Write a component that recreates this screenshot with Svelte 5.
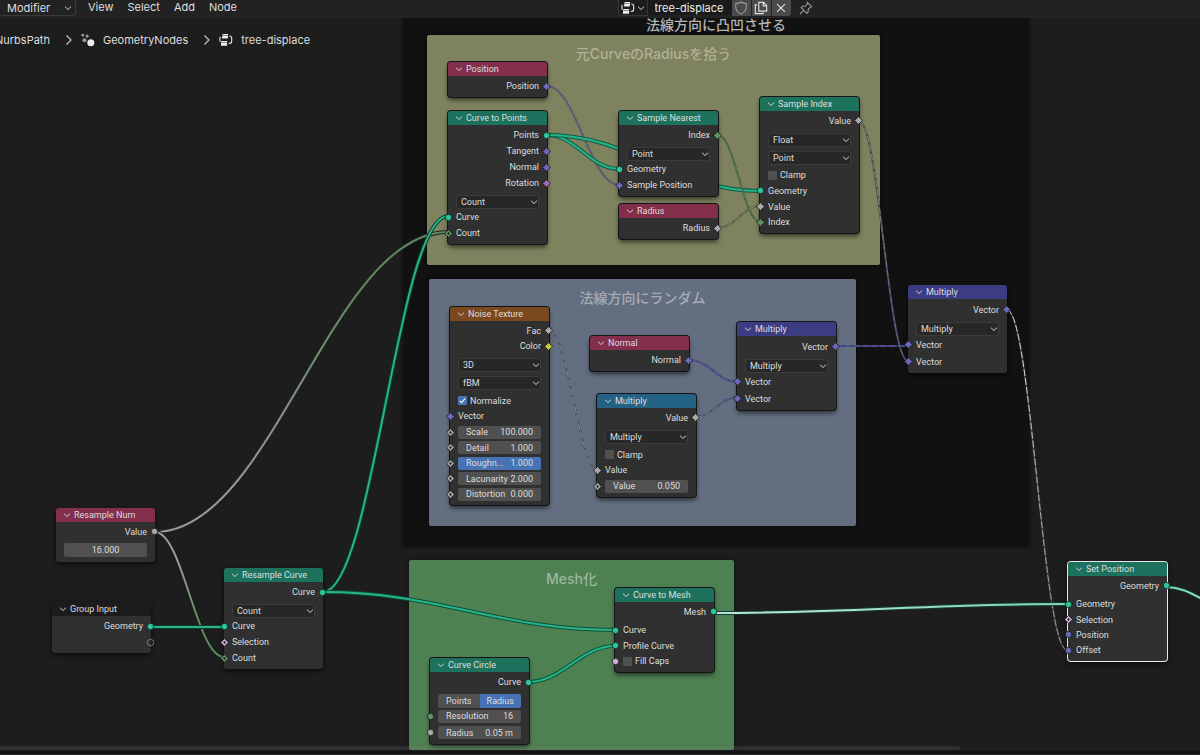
<script lang="ts">
  type Socket = "geo" | "vec" | "float" | "int" | "bool" | "rot" | "color" | "empty";
  type Shape = "circle" | "diamond" | "hollow";
  type Row = {
    kind: "out" | "in" | "select" | "check" | "field" | "value" | "tabs";
    label: string;
    socket?: Socket;
    shape?: Shape;
    value?: string;
    on?: boolean;
  };
  type Node = {
    id: string;
    title: string;
    tone: string;
    x: number;
    y: number;
    h: number;
    state?: "framed" | "selected";
    rows: Row[];
  };

  const out = (label: string, socket: Socket, shape: Shape = "circle"): Row => ({ kind: "out", label, socket, shape });
  const inp = (label: string, socket: Socket, shape: Shape = "circle"): Row => ({ kind: "in", label, socket, shape });
  const select = (label: string): Row => ({ kind: "select", label });
  const check = (label: string, on = false, socket?: Socket): Row => ({ kind: "check", label, on, socket, shape: "circle" });
  const field = (label: string, value: string, socket: Socket = "float", shape: Shape = "hollow", on = false): Row => ({
    kind: "field", label, value, socket, shape, on,
  });

  // canvas coordinates, top left corner of each node
  const nodes: Node[] = [
    { id: "position", title: "Position", tone: "input", x: 448, y: 62, h: 35, state: "framed",
      rows: [out("Position", "vec", "diamond")] },
    { id: "points", title: "Curve to Points", tone: "geometry", x: 448, y: 111, h: 133, state: "framed",
      rows: [
        out("Points", "geo"), out("Tangent", "vec", "diamond"), out("Normal", "vec", "diamond"),
        out("Rotation", "rot", "diamond"), select("Count"), inp("Curve", "geo"), inp("Count", "int", "hollow"),
      ] },
    { id: "nearest", title: "Sample Nearest", tone: "geometry", x: 619, y: 111, h: 85, state: "framed",
      rows: [out("Index", "int", "diamond"), select("Point"), inp("Geometry", "geo"), inp("Sample Position", "vec", "diamond")] },
    { id: "radius", title: "Radius", tone: "input", x: 619, y: 204, h: 35, state: "framed",
      rows: [out("Radius", "float", "diamond")] },
    { id: "index", title: "Sample Index", tone: "geometry", x: 760, y: 97, h: 136, state: "framed",
      rows: [
        out("Value", "float", "diamond"), select("Float"), select("Point"), check("Clamp"),
        inp("Geometry", "geo"), inp("Value", "float", "diamond"), inp("Index", "int", "diamond"),
      ] },
    { id: "noise", title: "Noise Texture", tone: "texture", x: 450, y: 307, h: 198, state: "framed",
      rows: [
        out("Fac", "float", "diamond"), out("Color", "color", "diamond"), select("3D"), select("fBM"),
        check("Normalize", true), inp("Vector", "vec", "diamond"), field("Scale", "100.000"), field("Detail", "1.000"),
        field("Roughn...", "1.000", "float", "hollow", true), field("Lacunarity", "2.000"), field("Distortion", "0.000"),
      ] },
    { id: "normal", title: "Normal", tone: "input", x: 590, y: 336, h: 35, state: "framed",
      rows: [out("Normal", "vec", "diamond")] },
    { id: "math", title: "Multiply", tone: "converter", x: 597, y: 394, h: 103, state: "framed",
      rows: [
        out("Value", "float", "diamond"), select("Multiply"), check("Clamp"),
        inp("Value", "float", "diamond"), field("Value", "0.050"),
      ] },
    { id: "vecmath", title: "Multiply", tone: "vector", x: 737, y: 322, h: 88, state: "framed",
      rows: [out("Vector", "vec", "diamond"), select("Multiply"), inp("Vector", "vec", "diamond"), inp("Vector", "vec", "diamond")] },
    { id: "scale", title: "Multiply", tone: "vector", x: 908, y: 285, h: 88,
      rows: [out("Vector", "vec", "diamond"), select("Multiply"), inp("Vector", "vec", "diamond"), inp("Vector", "vec", "diamond")] },
    { id: "num", title: "Resample Num", tone: "input", x: 56, y: 508, h: 54,
      rows: [out("Value", "float"), { kind: "value", label: "Value", value: "16.000" }] },
    { id: "group", title: "Group Input", tone: "group", x: 52, y: 602, h: 51,
      rows: [out("Geometry", "geo"), out("", "empty")] },
    { id: "resample", title: "Resample Curve", tone: "geometry", x: 224, y: 568, h: 101,
      rows: [out("Curve", "geo"), select("Count"), inp("Curve", "geo"), inp("Selection", "bool", "hollow"), inp("Count", "int", "hollow")] },
    { id: "circle", title: "Curve Circle", tone: "geometry", x: 430, y: 658, h: 86, state: "framed",
      rows: [
        out("Curve", "geo"), { kind: "tabs", label: "Mode" },
        field("Resolution", "16", "int", "circle"), field("Radius", "0.05 m", "float", "circle"),
      ] },
    { id: "mesh", title: "Curve to Mesh", tone: "geometry", x: 615, y: 588, h: 84, state: "framed",
      rows: [out("Mesh", "geo"), inp("Curve", "geo"), inp("Profile Curve", "geo"), check("Fill Caps", false, "bool")] },
    { id: "setpos", title: "Set Position", tone: "geometry", x: 1068, y: 562, h: 99, state: "selected",
      rows: [
        out("Geometry", "geo"), inp("Geometry", "geo"), inp("Selection", "bool", "hollow"),
        inp("Position", "vec"), inp("Offset", "vec"),
      ] },
  ];

  const frames = [
    { name: "outer", title: "法線方向に凸凹させる", x: 403, y: 15, w: 626, h: 532 },
    { name: "olive", title: "元CurveのRadiusを拾う", x: 427, y: 35, w: 453, h: 230 },
    { name: "blue", title: "法線方向にランダム", x: 429, y: 279, w: 427, h: 247 },
    { name: "green", title: "Mesh化", x: 409, y: 560, w: 325, h: 190 },
  ];

  const GEO = "#27b489";
  const VEC = "#5f5fa6";
  const FLOAT = "#9a9a9a";
  const INT = "#5a8a5c";

  // from, to, colours at both ends; field links are thin and dashed
  const links = [
    { p: [547, 86, 619, 185], c: ["#62617a", "#62617a"], field: true, rim: "#5a5968" },
    { p: [547, 135, 619, 169], c: [GEO, GEO], field: false, rim: "#0d5c46" },
    { p: [547, 135, 760, 191], c: [GEO, GEO], field: false, rim: "#0d5c46" },
    { p: [718, 135, 760, 222], c: ["#557a54", "#557a54"], field: true, rim: "#43603f" },
    { p: [718, 228, 760, 206], c: ["#86886f", "#86886f"], field: true, rim: "#55573f" },
    { p: [859, 121, 908, 361], c: ["#85876f", VEC], field: true, rim: "#44434c" },
    { p: [549, 331, 598, 470], c: ["#868c94", "#868c94"], field: true, rim: "#4a5058" },
    { p: [690, 360, 737, 382], c: [VEC, VEC], field: true, rim: "#3d4078" },
    { p: [696, 417, 737, 397], c: ["#868c94", VEC], field: true, rim: "#464a60" },
    { p: [835, 346, 908, 346], c: [VEC, VEC], field: true, rim: "#3a3a6a" },
    { p: [1007, 310, 1067, 650], c: ["#d0d0d0", "#9a9aae"], field: true, rim: "#3a3a3a" },
    { p: [155, 532, 448, 232], c: [FLOAT, INT], field: false, rim: "#222" },
    { p: [155, 532, 224, 657], c: [FLOAT, INT], field: false, rim: "#1a1a1a" },
    { p: [151, 627, 224, 627], c: [GEO, GEO], field: false, rim: "#0f3a2e" },
    { p: [323, 592, 448, 216], c: [GEO, GEO], field: false, rim: "#0b3b2d" },
    { p: [323, 592, 615, 630], c: [GEO, GEO], field: false, rim: "#0b4f3a" },
    { p: [528, 682, 615, 646], c: [GEO, GEO], field: false, rim: "#0b5a42" },
    { p: [713, 613, 1067, 604], c: ["#b6e6d8", "#86d8bd"], field: false, rim: "#16382e" },
    { p: [1166, 587, 1236, 610], c: ["#86d8bd", "#b6e6d8"], field: false, rim: "#16382e" },
  ];

  function curve([x1, y1, x2, y2]: number[]) {
    const reach = (x2 - x1) * 0.4;
    return `M${x1} ${y1}C${x1 + reach} ${y1} ${x2 - reach} ${y2} ${x2} ${y2}`;
  }

  const menus = ["View", "Select", "Add", "Node"];
  let mode = $state("Radius");
</script>

{#snippet chevron()}
  <svg class="chev" viewBox="0 0 8 8" aria-hidden="true"><path d="M1 2.7 4 5.5 7 2.7" /></svg>
{/snippet}

{#snippet treeIcon()}
  <svg class="ico" viewBox="0 0 16 16" aria-hidden="true">
    <path class="fill" d="M4.2 1h6.3l-.4 5.4H3.4zM2.6 9h6.8l-.2 5.7H2.2z" />
    <path class="dark" d="M3.8 2.8h6.4M2.8 10.8h6.4" />
    <path class="line" d="M11.8 3.4q2.7 0 2.7 2.6v3.3q0 2.7-3.3 2.7M1.6 4.4Q.4 7 1.5 10" />
  </svg>
{/snippet}

{#snippet dot(socket: Socket, shape: Shape)}
  <svg class="socket {socket}" viewBox="0 0 9 9" aria-hidden="true">
    {#if socket === "empty"}
      <circle cx="4.5" cy="4.5" r="3.2" />
    {:else if shape === "circle"}
      <circle cx="4.5" cy="4.5" r="3.2" />
    {:else}
      <path d="M4.5.6 8.4 4.5 4.5 8.4.6 4.5z" />
      {#if shape === "hollow"}<path class="hole" d="M4.5 3.1 5.9 4.5 4.5 5.9 3.1 4.5z" />{/if}
    {/if}
  </svg>
{/snippet}

<div class="editor">
  <main class="canvas">
    {#each frames as f (f.name)}
      <section class="frame {f.name}" style="left:{f.x}px;top:{f.y}px;width:{f.w}px;height:{f.h}px">
        <h2>{f.title}</h2>
      </section>
    {/each}

    <svg class="links" aria-hidden="true">
      <defs>
        {#each links as l, i}
          <linearGradient id="l{i}" gradientUnits="userSpaceOnUse" x1={l.p[0]} y1={l.p[1]} x2={l.p[2]} y2={l.p[3]}>
            <stop offset="0.2" stop-color={l.c[0]} />
            <stop offset="0.8" stop-color={l.c[1]} />
          </linearGradient>
        {/each}
      </defs>
      {#each links as l, i}
        <path class:thin={l.field} class="rim" d={curve(l.p)} stroke={l.rim} />
        <path class:dash={l.field} class="core" d={curve(l.p)} stroke={l.p[1] === l.p[3] ? l.c[0] : `url(#l${i})`} />
      {/each}
    </svg>

    {#each nodes as n (n.id)}
      <article class="node {n.state ?? ''}" style="left:{n.x}px;top:{n.y}px;height:{n.h}px">
        <header class={n.tone}>{@render chevron()}<span>{n.title}</span></header>
        <div class="body">
          {#each n.rows as r, i}
            <div class="row {r.kind}">
              {#if r.socket}{@render dot(r.socket, r.shape ?? "circle")}{/if}
              {#if r.kind === "select"}
                <select aria-label="{n.title} option {i}"><option>{r.label}</option></select>
                {@render chevron()}
              {:else if r.kind === "check"}
                <label><input type="checkbox" checked={r.on} /><span>{r.label}</span></label>
              {:else if r.kind === "field"}
                <label class:on={r.on}><span>{r.label}</span><input type="text" value={r.value} /></label>
              {:else if r.kind === "value"}
                <input type="text" aria-label={r.label} value={r.value} />
              {:else if r.kind === "tabs"}
                {#each ["Points", "Radius"] as m}
                  <button type="button" class:on={mode === m} onclick={() => (mode = m)}>{m}</button>
                {/each}
              {:else}
                <span>{r.label}</span>
              {/if}
            </div>
          {/each}
        </div>
      </article>
    {/each}
  </main>

  <div class="bar">
    <div class="menu">
      <div class="type">
        <select aria-label="Node tree type"><option>Modifier</option></select>
        {@render chevron()}
      </div>
      {#each menus as m}
        <button type="button">{m}</button>
      {/each}
    </div>
    <div class="tree">
      <button type="button" class="browse" aria-label="Browse node tree">{@render treeIcon()}{@render chevron()}</button>
      <input type="text" aria-label="Node tree name" value="tree-displace" />
      <button type="button" class="tool" aria-label="Fake user">
        <svg class="ico" viewBox="0 0 16 16"><path class="dim" d="M8 1.2Q5.5 3 2 3v4.5Q2.4 12.2 8 15q5.6-2.8 6-7.5V3Q10.5 3 8 1.2z" /></svg>
      </button>
      <button type="button" class="tool" aria-label="New node tree">
        <svg class="ico" viewBox="0 0 16 16"><path class="line" d="M5.5 1.5H11L14.500 5v6.500h-9zM10.500 1.500v4h4M3.500 4.500h-2v10h9V13" /></svg>
      </button>
      <button type="button" class="tool last" aria-label="Unlink node tree">
        <svg class="ico" viewBox="0 0 16 16"><path class="line" d="M3.5 3.5l9 9M12.5 3.5l-9 9" /></svg>
      </button>
      <button type="button" class="pin" aria-label="Pin">
        <svg class="ico" viewBox="0 0 16 16"><path class="dim" d="M9.5 1.5l5 5-1.5.5-2.5 2.5v3L9 14 2.5 7.5 4 6h3l2.500-2.500zM5.500 10.500 1 15" /></svg>
      </button>
    </div>
    <div class="rest"></div>
  </div>

  <nav class="path" aria-label="Context">
    <a href="#curve">NurbsPath</a>
    <svg class="sep" viewBox="0 0 8 12" aria-hidden="true"><path d="M1.5 1.5 6 6l-4.5 4.5" /></svg>
    <a href="#modifier">
      <svg class="ico" viewBox="0 0 16 16" aria-hidden="true">
        <circle class="fill" cx="11.2" cy="11" r="4" />
        <circle class="soft" cx="4" cy="8.4" r="2.3" />
        <circle class="soft" cx="2" cy="2.5" r="1.6" />
        <circle class="soft" cx="7" cy="3.5" r="1.8" />
      </svg>
      <span>GeometryNodes</span>
    </a>
    <svg class="sep" viewBox="0 0 8 12" aria-hidden="true"><path d="M1.5 1.5 6 6l-4.5 4.5" /></svg>
    <a href="#tree">{@render treeIcon()}<span>tree-displace</span></a>
  </nav>

  <div class="scroll"></div>
  <div class="edge"></div>
</div>

<style>
  :global(body) {
    margin: 0;
    background: #1d1d1d;
  }
  .editor {
    position: relative;
    display: flex;
    flex-direction: column;
    height: 100vh;
    overflow: hidden;
    background: #1d1d1d;
    color: #dedede;
    font-family: Inter, "Noto Sans CJK JP", sans-serif;
    font-size: 11px;
  }
  button,
  input,
  select {
    margin: 0;
    padding: 0;
    border: 0;
    border-radius: 0;
    outline: none;
    background: none;
    color: inherit;
    font: inherit;
    appearance: none;
  }
  a {
    color: inherit;
    text-decoration: none;
  }
  svg {
    flex: none;
    fill: none;
  }
  .chev {
    width: 8px;
    height: 8px;
    stroke: #d0d0d0;
    pointer-events: none;
  }
  .ico {
    width: 14px;
    height: 14px;
  }
  .line {
    stroke: #e0e0e0;
    stroke-width: 1.3;
  }
  .dim {
    stroke: #a0a0a0;
    stroke-width: 1.2;
  }
  .dark {
    stroke: #777;
    stroke-width: 1;
  }
  .fill {
    fill: #ececec;
  }
  .soft {
    fill: #9a9a9a;
  }

  /* header */
  .bar {
    position: relative;
    display: flex;
    justify-content: space-between;
    height: 18px;
    background: #222;
  }
  .menu {
    display: flex;
    gap: 14px;
    align-items: flex-start;
  }
  .menu button {
    height: 15px;
    line-height: 15px;
  }
  .type {
    display: flex;
    align-items: center;
    width: 76px;
    height: 16px;
    margin-right: -2px;
    box-sizing: border-box;
    padding-right: 3px;
    border: 1px solid #3a3a3a;
    border-width: 0 1px 1px 0;
    border-radius: 0 0 3px 3px;
  }
  .type select {
    flex: 1;
    min-width: 0;
    padding-left: 7px;
  }
  .tree {
    display: flex;
    height: 16px;
  }
  .tree button {
    display: flex;
    align-items: center;
    justify-content: center;
  }
  .tree .browse {
    width: 30px;
    gap: 2px;
    background: #1d1d1d;
    border: 1px solid #363636;
    border-top: 0;
    border-radius: 0 0 0 3px;
    box-sizing: border-box;
  }
  .tree input {
    width: 84px;
    height: 15px;
    padding-left: 7px;
    box-sizing: border-box;
    background: #1a1a1a;
    color: #eee;
  }
  .tree .tool {
    width: 19px;
    background: #4a4a4a;
    margin-right: 1px;
  }
  .tree .tool.last {
    border-radius: 0 0 3px 0;
  }
  .tree .pin {
    width: 28px;
  }

  .path {
    position: relative;
    display: flex;
    align-items: center;
    gap: 15px;
    height: 44px;
    margin-left: -5px;
  }
  .path a {
    display: flex;
    align-items: center;
    gap: 8px;
  }
  .sep {
    width: 8px;
    height: 12px;
    stroke: #bbb;
    stroke-width: 1.3;
    margin-right: -7px;
  }

  /* canvas */
  .canvas {
    position: absolute;
    inset: 0 0 5px;
    overflow: hidden;
    font-family: Roboto, "Noto Sans CJK JP", sans-serif;
    font-size: 9px;
  }
  .frame {
    position: absolute;
    border-radius: 2px;
    box-shadow: 0 0 4px #0008;
  }
  .frame h2 {
    margin: 0;
    padding-top: 9px;
    font-family: Inter, "Noto Sans CJK JP", sans-serif;
    font-size: 14px;
    line-height: 20px;
    font-weight: 500;
    text-align: center;
    color: #b0b196;
  }
  .outer {
    background: #111;
  }
  .frame.outer h2 {
    padding-top: 0;
    color: #b4b4b4;
  }
  .olive {
    background: #7f825f;
  }
  .blue {
    background: #636f81;
  }
  .blue h2 {
    color: #a5abb5;
  }
  .green {
    background: #4e8152;
  }
  .green h2 {
    color: #98b89a;
  }
  .links {
    position: absolute;
    inset: 0;
    width: 100%;
    height: 100%;
  }
  .rim {
    stroke-width: 4;
  }
  .rim.thin {
    stroke-width: 2;
  }
  .core {
    stroke-width: 2;
  }
  .core.dash {
    stroke-width: 1;
    stroke-dasharray: 7 2;
  }

  .node {
    position: absolute;
    display: flex;
    flex-direction: column;
    width: 99px;
    border-radius: 3px;
    background: #303030;
    box-shadow: 0 2px 5px #000a;
  }
  .framed {
    box-shadow: 0 0 0 1px #151515, 0 3px 5px #0009;
  }
  .selected {
    box-shadow: 0 0 0 1px #e8e8e8, 0 3px 6px #000a;
  }
  .node header {
    display: flex;
    align-items: center;
    gap: 3px;
    height: 14px;
    padding-left: 7px;
    border-radius: 3px 3px 0 0;
    white-space: nowrap;
  }
  .input {
    background: #832f4b;
  }
  .geometry {
    background: #1d725d;
  }
  .texture {
    background: #7a481f;
  }
  .converter {
    background: #246283;
  }
  .vector {
    background: #3c3c83;
  }
  .group {
    background: #1c1c1c;
  }
  .body {
    flex: 1;
    display: flex;
    flex-direction: column;
    padding: 2px 0 3px;
  }
  .row {
    position: relative;
    flex: 1 1 15px;
    display: flex;
    align-items: center;
    padding: 0 8px;
    white-space: nowrap;
  }
  .out {
    justify-content: flex-end;
  }
  .out + .in {
    margin-top: 3px;
  }
  .select,
  .tabs,
  .value {
    flex: none;
    height: 14px;
    margin-top: 4px;
  }
  .select select {
    flex: 1;
    min-width: 0;
    height: 14px;
    padding-left: 4px;
    box-sizing: border-box;
    border: 1px solid #3b3b3b;
    border-radius: 2px;
    background: #272727;
  }
  .select .chev {
    position: absolute;
    right: 9px;
  }
  .select + .check {
    margin-top: 3px;
  }
  .value {
    margin-bottom: 2px;
  }
  .check label {
    display: flex;
    align-items: center;
    gap: 3px;
  }
  .check input {
    width: 9px;
    height: 9px;
    border-radius: 1px;
    background: #505050;
  }
  .check input:checked {
    display: grid;
    place-items: center;
    background: #4772b3;
  }
  .check input:checked::after {
    content: "";
    width: 2px;
    height: 5px;
    margin-bottom: 2px;
    border: solid #fff;
    border-width: 0 1px 1px 0;
    transform: rotate(40deg);
  }
  .field label {
    flex: 1;
    display: flex;
    align-items: center;
    height: 13px;
    padding: 0 8px;
    border-radius: 2px;
    background: #505050;
  }
  .field label.on {
    background: #4772b3;
  }
  .field label span {
    flex: 1;
    width: 0;
  }
  .field input {
    width: 34px;
    text-align: right;
  }
  .value input {
    flex: 1;
    min-width: 0;
    height: 14px;
    border-radius: 2px;
    background: #505050;
    text-align: center;
  }
  .tabs button {
    flex: 1;
    height: 14px;
    background: #505050;
    border-radius: 2px 0 0 2px;
  }
  .tabs button + button {
    border-radius: 0 2px 2px 0;
  }
  .tabs button.on {
    background: #4772b3;
  }

  .socket {
    position: absolute;
    left: -4px;
    width: 9px;
    height: 9px;
    fill: currentColor;
    stroke: #17171b;
    stroke-width: 0.8;
  }
  .out .socket {
    left: auto;
    right: -4px;
  }
  .hole {
    fill: #222;
    stroke: none;
  }
  .geo {
    color: #2cc79b;
  }
  .vec {
    color: #6a69b9;
  }
  .float {
    color: #a8a8a8;
  }
  .int {
    color: #5f9463;
  }
  .bool {
    color: #d0afd9;
  }
  .rot {
    color: #a267b8;
  }
  .color {
    color: #c9c936;
  }
  .empty {
    fill: none;
    stroke: #8a8a8a;
  }

  .scroll {
    position: absolute;
    left: 0;
    right: 20%;
    bottom: 5px;
    height: 4px;
    border-radius: 0 2px 2px 0;
    background: #80808030;
  }
  .edge {
    height: 3px;
    margin-top: auto;
    background: #131313;
    border-bottom: 1px solid #2c2c2c;
  }
</style>
